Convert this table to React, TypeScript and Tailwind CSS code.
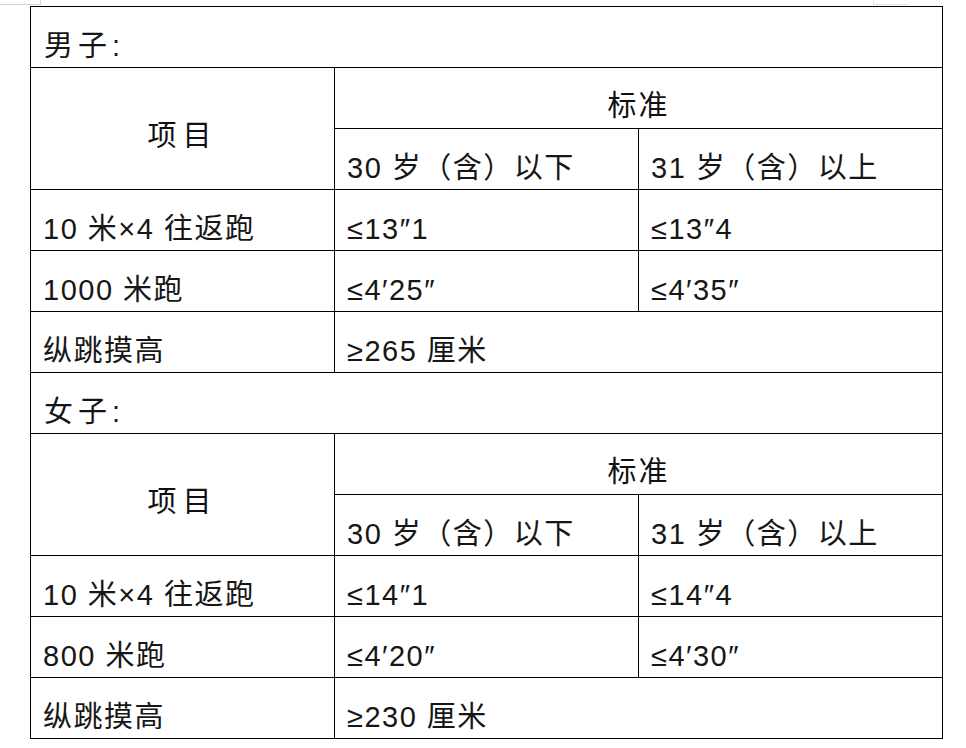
import React from "react"

const font = { fontFamily: '"Liberation Sans", "Noto Sans CJK SC", sans-serif' }

function Cell({
    children,
    className = "",
}: {
    children?: React.ReactNode
    className?: string
}) {
    return (
        <div
            className={`flex h-[61px] items-end border-r border-b border-black pb-[5px] pl-[12px] text-[29px] leading-[32px] tracking-[1.5px] text-[#161616] ${className}`}
        >
            {children}
        </div>
    )
}

type Row = { name: string; a: string; b?: string }

function Section({ title, rows }: { title: string; rows: Row[] }) {
    return (
        <>
            {/* section title */}
            <Cell className="col-span-3 tracking-[5px] pl-[13px]">{title}</Cell>

            {/* header: 项目 spans two rows */}
            <div className="row-span-2 flex h-[122px] items-center justify-center border-r border-b border-black pt-[14px] text-[29px] leading-[32px] tracking-[6px] text-[#111]">
                项目
            </div>
            <div className="col-span-2 flex h-[61px] items-end justify-center border-r border-b border-black pb-[6px] text-[29px] leading-[32px] tracking-[2px] text-[#111]">
                标准
            </div>
            <Cell>30 岁（含）以下</Cell>
            <Cell>31 岁（含）以上</Cell>

            {rows.map((r) =>
                r.b ? (
                    <React.Fragment key={r.name}>
                        <Cell>{r.name}</Cell>
                        <Cell>{r.a}</Cell>
                        <Cell>{r.b}</Cell>
                    </React.Fragment>
                ) : (
                    <React.Fragment key={r.name}>
                        <Cell>{r.name}</Cell>
                        <Cell className="col-span-2">{r.a}</Cell>
                    </React.Fragment>
                )
            )}
        </>
    )
}

export default function App() {
    return (
        <div className="relative h-[748px] w-[966px] overflow-hidden bg-white pt-[6px] pl-[30px]" style={font}>
            {/* page corner marks */}
            <div className="absolute top-0 left-0 h-[5px] w-[41px] border-r border-b border-[#d4d4d4]" />
            <div className="absolute top-0 left-[873px] h-[5px] w-[36px] border-l border-b border-[#e0e0e0]" />

            <div className="grid w-[913px] grid-cols-[304px_304px_304px] border-t border-l border-black">
                <Section
                    title="男子:"
                    rows={[
                        { name: "10 米×4 往返跑", a: "≤13″1", b: "≤13″4" },
                        { name: "1000 米跑", a: "≤4′25″", b: "≤4′35″" },
                        { name: "纵跳摸高", a: "≥265 厘米" },
                    ]}
                />
                <Section
                    title="女子:"
                    rows={[
                        { name: "10 米×4 往返跑", a: "≤14″1", b: "≤14″4" },
                        { name: "800 米跑", a: "≤4′20″", b: "≤4′30″" },
                        { name: "纵跳摸高", a: "≥230 厘米" },
                    ]}
                />
            </div>
        </div>
    )
}
